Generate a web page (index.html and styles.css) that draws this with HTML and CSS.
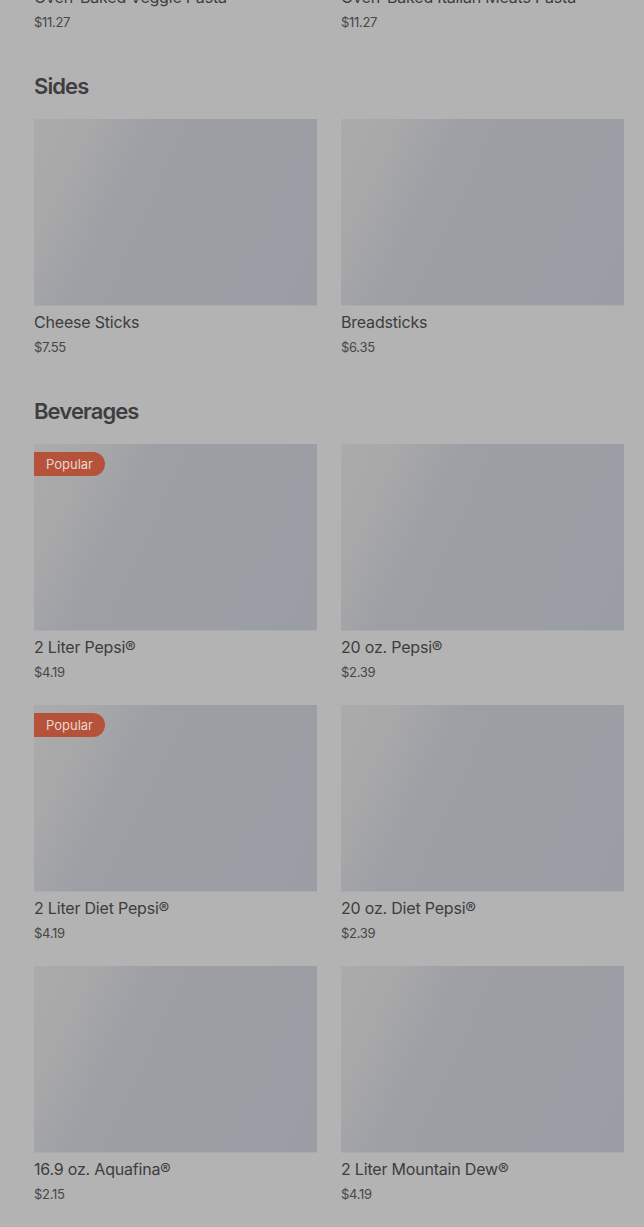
FILE: index.html
```html
<!DOCTYPE html>
<html lang="en">
<head>
  <meta charset="UTF-8">
  <meta name="viewport" content="width=device-width, initial-scale=1.0">
  <title>Menu</title>
  <link rel="stylesheet" href="styles.css">
</head>
<body>
  <div class="menu">
    <!-- pasta (scrolled past) -->
    <section class="section">
      <h2 class="section-title">Pasta</h2>
      <div class="grid">
        <div class="card">
          <div class="card-img"></div>
          <div class="card-name">Oven-Baked Veggie Pasta</div>
          <div class="card-price">$11.27</div>
        </div>
        <div class="card">
          <div class="card-img"></div>
          <div class="card-name">Oven-Baked Italian Meats Pasta</div>
          <div class="card-price">$11.27</div>
        </div>
      </div>
    </section>

    <section class="section">
      <h2 class="section-title">Sides</h2>
      <div class="grid">
        <div class="card">
          <div class="card-img"></div>
          <div class="card-name">Cheese Sticks</div>
          <div class="card-price">$7.55</div>
        </div>
        <div class="card">
          <div class="card-img"></div>
          <div class="card-name">Breadsticks</div>
          <div class="card-price">$6.35</div>
        </div>
      </div>
    </section>

    <section class="section">
      <h2 class="section-title">Beverages</h2>
      <div class="grid">
        <div class="card">
          <div class="card-img"><span class="badge">Popular</span></div>
          <div class="card-name">2 Liter Pepsi®</div>
          <div class="card-price">$4.19</div>
        </div>
        <div class="card">
          <div class="card-img"></div>
          <div class="card-name">20 oz. Pepsi®</div>
          <div class="card-price">$2.39</div>
        </div>
        <div class="card">
          <div class="card-img"><span class="badge">Popular</span></div>
          <div class="card-name">2 Liter Diet Pepsi®</div>
          <div class="card-price">$4.19</div>
        </div>
        <div class="card">
          <div class="card-img"></div>
          <div class="card-name">20 oz. Diet Pepsi®</div>
          <div class="card-price">$2.39</div>
        </div>
        <div class="card">
          <div class="card-img"></div>
          <div class="card-name">16.9 oz. Aquafina®</div>
          <div class="card-price">$2.15</div>
        </div>
        <div class="card">
          <div class="card-img"></div>
          <div class="card-name">2 Liter Mountain Dew®</div>
          <div class="card-price">$4.19</div>
        </div>
        <div class="card">
          <div class="card-img"></div>
          <div class="card-name">20 oz. Mountain Dew®</div>
          <div class="card-price">$2.39</div>
        </div>
        <div class="card">
          <div class="card-img"></div>
          <div class="card-name">2 Liter Sierra Mist®</div>
          <div class="card-price">$4.19</div>
        </div>
      </div>
    </section>
  </div>
</body>
</html>
```

FILE: styles.css
```css
body {
  margin: 0;
  padding: 0;
  background-color: #b3b3b3;
  font-family: Inter, 'Noto Sans', Arial, sans-serif;
  color: #3b3b3b;
  overflow: hidden;
}
.menu {
  margin-top: -255px;
  padding: 0 20px 0 34px;
}
.section {
  margin-bottom: 38px;
}
.section-title {
  margin: 0 0 17px;
  font-size: 22px;
  line-height: 32px;
  font-weight: 600;
  letter-spacing: -0.9px;
  color: #3e3e3e;
}
.grid {
  display: grid;
  grid-template-columns: 283px 283px;
  column-gap: 24px;
  row-gap: 23px;
}
.card-img {
  position: relative;
  height: 187px;
  background: linear-gradient(115deg, #ababab 0%, #a8a8a9 16%, #9d9fa5 34%, #9b9da4 100%);
  border-bottom: 1px solid #a9abb0;
  box-sizing: border-box;
}
.card-name {
  margin-top: 4px;
  font-size: 16px;
  line-height: 24px;
  color: #3d3d3d;
  letter-spacing: -0.2px;
}
.card-price {
  margin-top: 3px;
  font-size: 13px;
  line-height: 20px;
  color: #474747;
  letter-spacing: -0.3px;
}
.badge {
  position: absolute;
  top: 8px;
  left: 0;
  height: 24px;
  line-height: 24px;
  padding: 0 12px;
  font-size: 13px;
  color: #ecd6cf;
  background-color: #b5533a;
  border-radius: 0 12px 12px 0;
}
```
